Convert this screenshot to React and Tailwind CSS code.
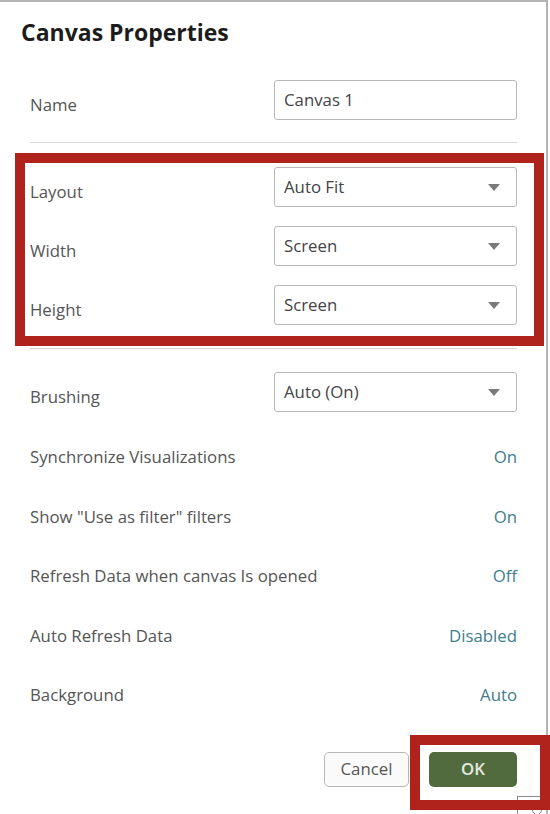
import React from "react";

const Caret = () => (
  <svg width="12" height="7" viewBox="0 0 12 7" className="shrink-0">
    <path d="M0 0 L12 0 L6 7 Z" fill="#7a7a7a" />
  </svg>
);

const Select = ({ value }) => (
  <div className="flex h-10 w-[243px] items-center justify-between rounded-[3px] border border-[#b8b8b8] pl-[9px] pr-[16px] text-[16.8px] text-[#444]">
    <span>{value}</span>
    <Caret />
  </div>
);

const FieldRow = ({ label, children }) => (
  <div className="flex h-10 items-center justify-between">
    <span className="mt-[10px] text-[16.8px] text-[#555]">{label}</span>
    {children}
  </div>
);

const ToggleRow = ({ label, value }) => (
  <div className="flex h-[59.5px] items-center justify-between text-[16.8px]">
    <span className="text-[#555]">{label}</span>
    <span className="text-[#3f7d8c]">{value}</span>
  </div>
);

export default function App() {
  return (
    <div className="relative h-[814px] w-[550px] overflow-hidden bg-white font-['Open_Sans',sans-serif]">
      <div className="flex h-full w-[548px] flex-col border-r-2 border-t-2 border-[#b4b4b4]">
        <h1 className="ml-[21px] mt-[15px] text-[23px] font-bold leading-[30px] text-[#1c1c1c]">
          Canvas Properties
        </h1>

        <div className="mt-[33px] flex flex-col pl-[30px] pr-[29px]">
          <FieldRow label="Name">
            <div className="flex h-10 w-[243px] items-center rounded-[3px] border border-[#b8b8b8] pl-[9px] text-[16.8px] text-[#444]">
              Canvas 1
            </div>
          </FieldRow>

          <div className="mt-[22px] h-px bg-[#d6d6d6]" />

          <div className="mt-[24px] flex flex-col gap-[19px]">
            <FieldRow label="Layout">
              <Select value="Auto Fit" />
            </FieldRow>
            <FieldRow label="Width">
              <Select value="Screen" />
            </FieldRow>
            <FieldRow label="Height">
              <Select value="Screen" />
            </FieldRow>
          </div>

          <div className="mt-[23px] h-px bg-[#d6d6d6]" />

          <div className="mt-[23px]">
            <FieldRow label="Brushing">
              <Select value="Auto (On)" />
            </FieldRow>
          </div>

          <div className="mt-[15px] flex flex-col">
            <ToggleRow label="Synchronize Visualizations" value="On" />
            <ToggleRow label={'Show "Use as filter" filters'} value="On" />
            <ToggleRow label="Refresh Data when canvas Is opened" value="Off" />
            <ToggleRow label="Auto Refresh Data" value="Disabled" />
            <ToggleRow label="Background" value="Auto" />
          </div>

          <div className="mt-[27px] flex justify-end gap-[20px]">
            <button className="h-[35px] w-[85px] rounded-[5px] border border-[#b8b8b8] bg-[#fafafa] text-[16.8px] text-[#555]">
              Cancel
            </button>
            <button className="h-[35px] w-[88px] rounded-[5px] bg-[#516b3f] text-[16.8px] font-semibold text-[#e6ecdf]">
              OK
            </button>
          </div>
        </div>
      </div>

      {/* element peeking in from behind, bottom right */}
      <div className="absolute left-[517px] top-[796px] h-[30px] w-[40px] border-l border-t border-[#8a8a8a]">
        <div className="ml-[14px] mt-[8px] h-[10px] w-[10px] rounded-full border border-[#888]" />
      </div>

      {/* annotation frames */}
      <div className="pointer-events-none absolute left-[15px] top-[153px] h-[193px] w-[529px] border-[10px] border-[#b0231c]" />
      <div className="pointer-events-none absolute left-[410px] top-[735px] h-[75px] w-[140px] border-[10px] border-[#b0231c]" />
    </div>
  );
}
